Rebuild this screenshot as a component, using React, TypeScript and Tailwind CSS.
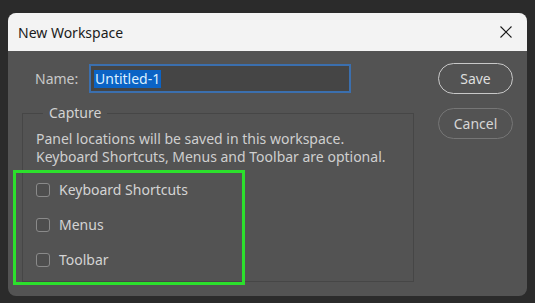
import React from 'react';

const font = { fontFamily: '"Noto Sans", "Open Sans", sans-serif' };

const options: string[] = ['Keyboard Shortcuts', 'Menus', 'Toolbar'];

const App: React.FC = () => {
  return (
    <div className="relative w-[535px] h-[303px] bg-[#2b2b2b] pt-[13px] pl-[8px] overflow-hidden" style={font}>
      <div className="w-[519px] h-[283px] rounded-[8px] overflow-hidden bg-[#535353] flex flex-col">
        {/* title bar */}
        <div className="h-[38px] bg-[#f3f3f3] flex items-center pl-[10px] pr-[15px]">
          <span className="text-[14px] text-[#1b1b1b]">New Workspace</span>
          <svg className="ml-auto" width="12" height="12" viewBox="0 0 12 12">
            <path d="M0.5 0.5 L11.5 11.5 M11.5 0.5 L0.5 11.5" stroke="#1b1b1b" strokeWidth="1.1" />
          </svg>
        </div>

        {/* body */}
        <div className="flex flex-1">
          <div className="pl-[14px] pt-[13px]">
            <div className="flex items-center pl-[13px]">
              <span className="w-[44px] text-[14px] text-[#c8c8c8]">Name:</span>
              <div className="ml-[10px] w-[262px] h-[29px] bg-[#454545] border-2 border-[#3b6fae] flex items-center pl-[3px]">
                <span className="bg-[#0b63c5] text-[#dcefff] text-[14px] leading-[18px] px-[1px]">Untitled-1</span>
              </div>
            </div>

            <fieldset className="mt-[10px] w-[392px] h-[179px] border border-[#464646] pl-[13px]">
              <legend className="ml-[7px] px-[6px] text-[14px] leading-[20px] text-[#d2d2d2]">Capture</legend>
              <p className="pt-[7px] text-[14px] leading-[18px] text-[#cfcfcf]">
                Panel locations will be saved in this workspace.
                <br />
                Keyboard Shortcuts, Menus and Toolbar are optional.
              </p>
              <div className="mt-[6px] flex flex-col">
                {options.map((o) => (
                  <label key={o} className="h-[35px] flex items-center gap-[9px]">
                    <span className="w-[14px] h-[14px] rounded-[3px] border border-[#8a8a8a] bg-[#4e4e4e]" />
                    <span className="text-[14px] text-[#d4d4d4]">{o}</span>
                  </label>
                ))}
              </div>
            </fieldset>
          </div>

          <div className="ml-auto pr-[14px] pt-[12px] flex flex-col gap-[14px]">
            <button className="w-[75px] h-[31px] rounded-full border border-[#c8c8c8] text-[14px] text-[#dedede]">Save</button>
            <button className="w-[75px] h-[31px] rounded-full border border-[#767676] text-[14px] text-[#d6d6d6]">Cancel</button>
          </div>
        </div>
      </div>

      {/* annotation highlight */}
      <div className="absolute left-[13px] top-[170px] w-[232px] h-[115px] border-[3px] border-[#2ce02c]" />
    </div>
  );
};

export default App;
